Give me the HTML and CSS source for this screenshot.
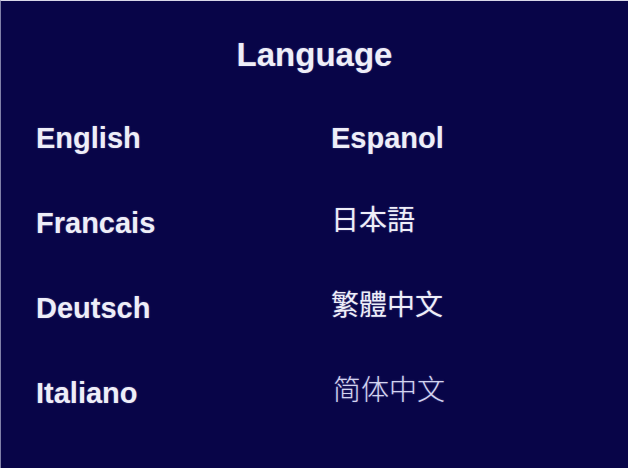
FILE: index.html
```html
<!DOCTYPE html>
<html lang="en">
<head>
<meta charset="utf-8">
<title>Language</title>
<link rel="stylesheet" href="styles.css">
</head>
<body>
<div class="screen">
  <h1 class="title">Language</h1>
  <div class="grid">
    <div class="item">English</div>
    <div class="item">Espanol</div>
    <div class="item">Francais</div>
    <div class="item cjk" lang="ja">日本語</div>
    <div class="item">Deutsch</div>
    <div class="item cjk" lang="zh-TW">繁體中文</div>
    <div class="item">Italiano</div>
    <div class="item cjk light" lang="zh-CN">简体中文</div>
  </div>
</div>
</body>
</html>
```
FILE: styles.css
```css
html, body {
  margin: 0;
  padding: 0;
  background: #080548;
}
.screen {
  width: 628px;
  height: 468px;
  box-sizing: border-box;
  border-top: 1px solid #d8d8e8;
  border-left: 1px solid #8080a8;
  background: #080548;
  font-family: "Liberation Sans", Arial, sans-serif;
  color: #eeeef8;
  padding-top: 34px;
}
.title {
  margin: 0;
  font-size: 33px;
  line-height: 40px;
  font-weight: bold;
  text-align: center;
  text-shadow: 0 0 2px rgba(200, 200, 255, 0.35);
}
.grid {
  margin-top: 21px;
  padding-left: 35px;
  display: grid;
  grid-template-columns: 295px 1fr;
  grid-auto-rows: 85px;
}
.item {
  display: flex;
  align-items: center;
  font-size: 29px;
  font-weight: bold;
  text-shadow: 0 0 2px rgba(200, 200, 255, 0.35);
}
.cjk {
  font-family: "Noto Sans CJK JP", "Noto Sans CJK TC", "Noto Sans CJK SC", sans-serif;
  font-size: 28px;
  font-weight: 400;
  padding-bottom: 11px;
  box-sizing: border-box;
}
.cjk[lang="zh-TW"] {
  font-family: "Noto Sans CJK TC", sans-serif;
}
.cjk.light {
  font-family: "Noto Sans CJK SC", sans-serif;
  font-weight: 200;
  color: #d4d4f0;
  padding-left: 2px;
}
```
